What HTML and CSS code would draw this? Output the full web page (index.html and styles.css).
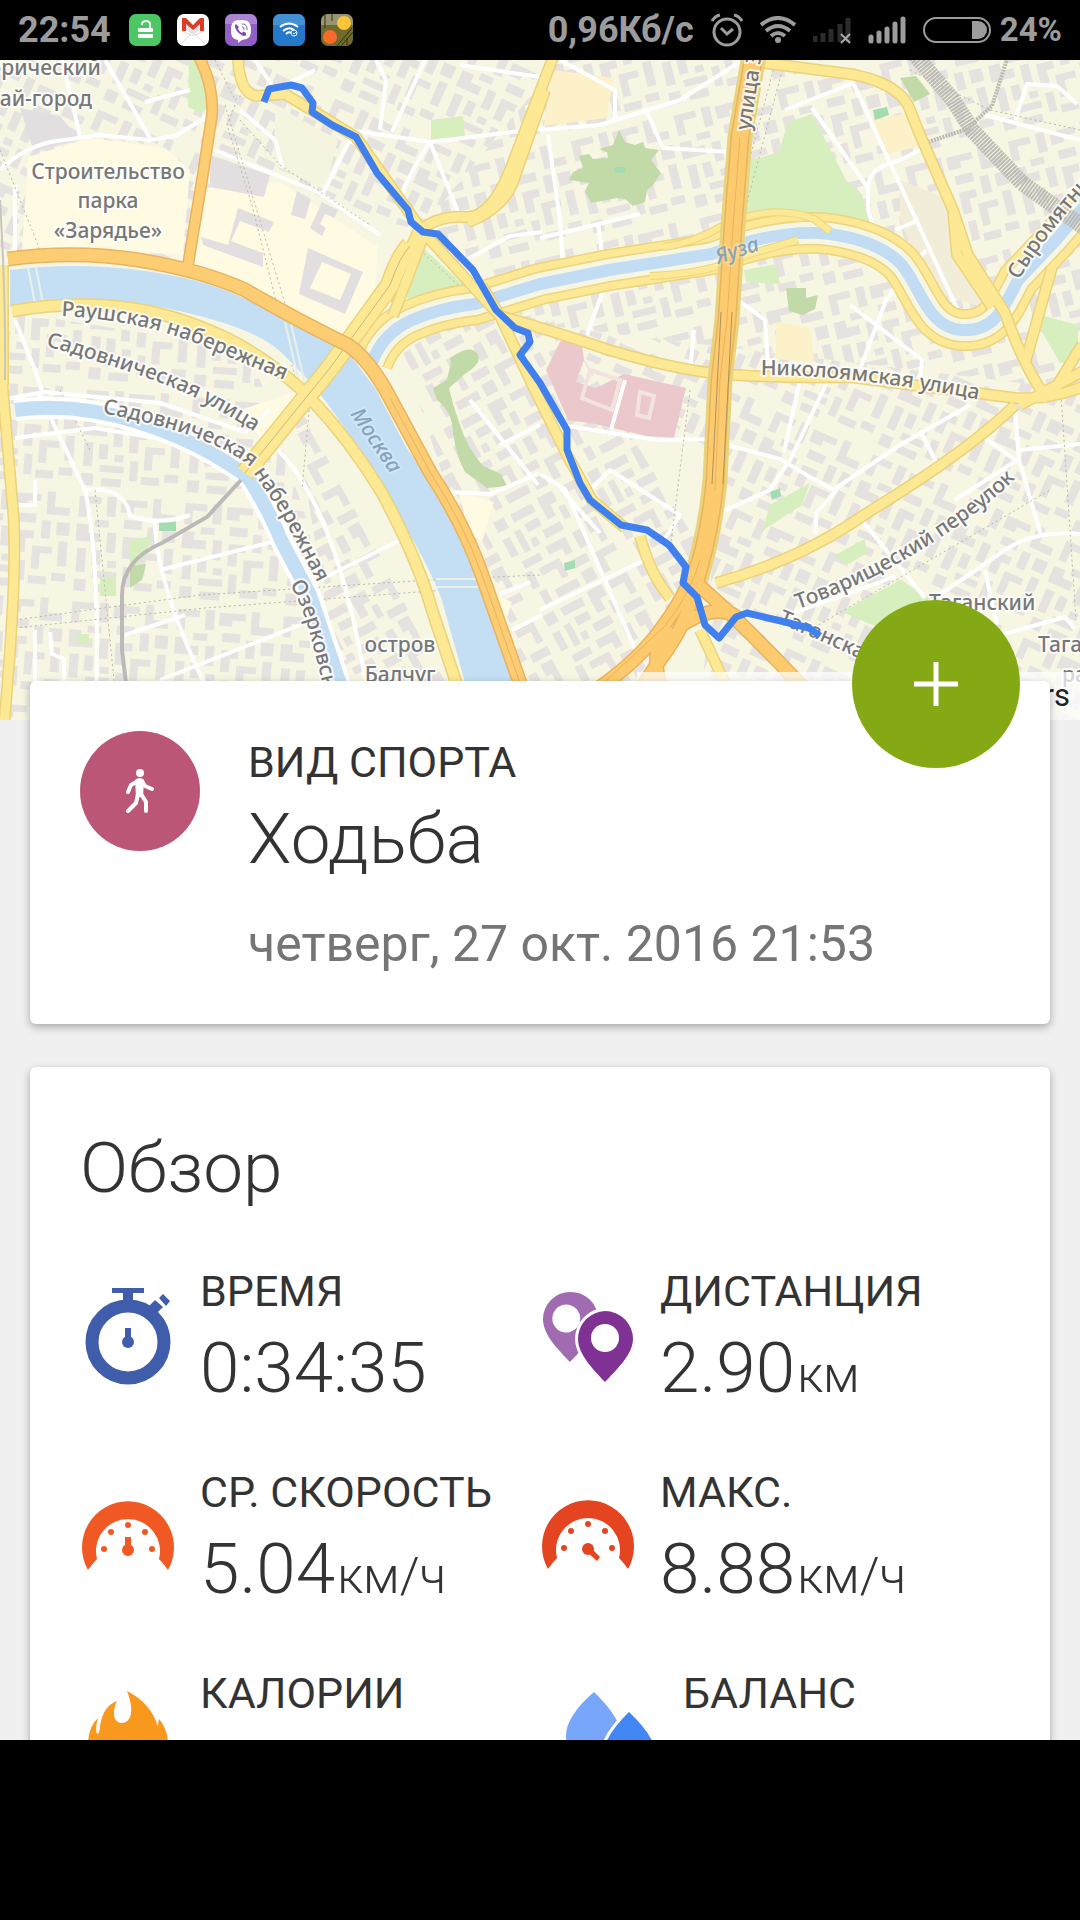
FILE: index.html
```html
<!DOCTYPE html>
<html lang="ru">
<head>
    <meta charset="UTF-8">
    <meta name="viewport" content="width=device-width, initial-scale=1.0">
    <title>Ходьба</title>
    <link rel="stylesheet" href="styles.css">
</head>
<body>
    <header class="status-bar">
        <span class="status-text">22:54</span>
        <div class="app-icons">
            <svg class="app-icon" viewBox="0 0 32 32">
                <rect width="32" height="32" rx="7" fill="#4cc764"/>
                <path d="M13 11v-1a4 3 0 0 1 8 0v5" fill="none" stroke="#fff" stroke-width="2"/>
                <rect x="9" y="14" width="15" height="4" rx="1" fill="#fff"/>
                <rect x="9" y="20" width="15" height="4" rx="1" fill="#fff"/>
            </svg>
            <svg class="app-icon" viewBox="0 0 32 32">
                <rect width="32" height="32" rx="7" fill="#fff"/>
                <path d="M5 17l11 5 11-5M5 29l9-9M27 29l-9-9" fill="none" stroke="#ddd"/>
                <path d="M9 16V9l7 6 7-6v7l-7 5z" fill="#e4e4e4"/>
                <path d="M5 17V4h4l7 7 7-7h4v13h-4v-7l-7 6-7-6v7z" fill="#da3d24"/>
            </svg>
            <svg class="app-icon" viewBox="0 0 32 32">
                <rect width="32" height="32" rx="7" fill="#915fc6"/>
                <path d="M7 0h18a7 7 0 0 1 7 7v3H0V7a7 7 0 0 1 7-7z" fill="#ab85d4"/>
                <path d="M16 6c8 0 10 3 10 10s-2 9-9 10l-4 3v-3c-5-1-7-3-7-10S8 6 16 6z" fill="#fff"/>
                <path d="M11 10c-3 2 1 8 4 10s5 3 6 1-2-4-3-3l-1 1c-2-1-4-3-4-5l1-1-3-3z" fill="#7f4cb5"/>
                <path d="M17 10c4 0 5 2 5 6M17 13c2 0 2 1 2 3" fill="none" stroke="#7f4cb5"/>
            </svg>
            <svg class="app-icon" viewBox="0 0 32 32">
                <rect width="32" height="32" rx="7" fill="#2579ca"/>
                <path d="M7 0h18a7 7 0 0 1 7 7v4H0V7a7 7 0 0 1 7-7z" fill="#4390d5"/>
                <path d="M7 13q9-7 18 0M10 17q6-5 11-1M13 20q3-3 5-1" fill="none" stroke="#fff" stroke-width="2"/>
                <circle cx="21" cy="19" r="3" fill="#2579ca" stroke="#fff"/>
                <path d="M20 19l1 1 3-3" fill="none" stroke="#fff"/>
            </svg>
            <svg class="app-icon" viewBox="0 0 32 32">
                <rect width="32" height="32" rx="7" fill="#6d6c2c"/>
                <path d="M7 0h18a7 7 0 0 1 7 7v4H0V7a7 7 0 0 1 7-7z" fill="#989471"/>
                <path d="M4 0v14M11 0v7M31 14L16 32M32 18L20 32M26 24v7" fill="none" stroke="#38300f"/>
                <circle cx="23" cy="9" r="7" fill="#fbc43a"/>
                <circle cx="9" cy="23" r="7" fill="#f96a2b"/>
            </svg>
        </div>
        <div class="status-right">
            <span class="status-text">0,96Кб/с</span>
            <svg class="icon-alarm" viewBox="0 0 32 34">
                <circle cx="16" cy="19" r="13" fill="none" stroke="#9c9c9c" stroke-width="3"/>
                <path d="M10 15l6 6 6-5M1 8q3-5 8-6M31 8q-3-5-8-6" fill="none" stroke="#9c9c9c" stroke-width="3"/>
            </svg>
            <svg class="icon-wifi" viewBox="0 0 36 28">
                <path d="M1 9Q18-5 35 9M6 15q12-10 24 0M11 20q7-6 14 0" fill="none" stroke="#9c9c9c" stroke-width="4"/>
                <circle cx="18" cy="24" r="3" fill="#9c9c9c"/>
            </svg>
            <svg class="icon-signal" viewBox="0 0 38 28">
                <path d="M2 26v-6M10 26v-9M18 26V13M27 26V8M35 26V2" stroke="#2c2c2c" stroke-width="5"/>
                <path d="M28 18l9 9M37 18l-9 9" stroke="#aaa" stroke-width="2"/>
            </svg>
            <svg class="icon-signal" viewBox="0 0 38 28">
                <path d="M3 25v-4M11 25v-8M19 25V13M27 25V8M35 25V3" stroke="#9c9c9c" stroke-width="5" stroke-linecap="round"/>
            </svg>
            <span class="battery">
                <svg class="icon-battery" viewBox="0 0 68 26">
                    <rect x="1" y="1" width="66" height="24" rx="12" fill="none" stroke="#9c9c9c" stroke-width="2"/>
                    <path d="M49 4h6a9 9 0 0 1 0 18h-6z" fill="#9c9c9c"/>
                </svg>
                <span class="status-text status-percent">24%</span>
            </span>
        </div>
    </header>

    <main class="content">
        <section class="map">
            <svg class="map-canvas" viewBox="0 0 1080 660" preserveAspectRatio="xMidYMin slice">
                <defs>
                    <g id="blocks" fill="#e6e2e0">
                        <path d="M4 5h22v7H12v14H4zM32 4h9v20h-9zM46 6h26v7H59v6H46zM78 3h8v15h15v8H78z"/>
                        <path d="M3 33h12v8h12v9H3zM21 28h14v7H21zM34 40h9v20h-9zM50 26h18v9H50zM74 32h9v18h-9zM89 33h13v13H89z"/>
                        <path d="M5 57h9v24H5zM20 58h9v15h-9zM22 79h24v7H22zM50 43h17v8h-8v14h-9zM66 58h20v7H74v16h-8zM92 52h9v25h-9z"/>
                        <path d="M4 88h12v12H4zM36 68h9v7h-9zM52 73h8v20h-8zM64 88h18v8H64zM87 84h14v8H87zM24 92h20v8H24z"/>
                    </g>
                    <pattern id="district-a" width="106" height="106" patternUnits="userSpaceOnUse" patternTransform="rotate(-14)">
                        <use href="#blocks"/>
                    </pattern>
                    <pattern id="district-b" width="106" height="106" patternUnits="userSpaceOnUse" patternTransform="rotate(24)">
                        <use href="#blocks"/>
                    </pattern>
                    <pattern id="district-c" width="106" height="106" patternUnits="userSpaceOnUse" patternTransform="rotate(62)">
                        <use href="#blocks"/>
                    </pattern>
                    <pattern id="district-d" width="106" height="106" patternUnits="userSpaceOnUse" patternTransform="rotate(4)">
                        <use href="#blocks"/>
                    </pattern>

                    <path id="yauza" d="M372 303Q382 274 410 261T475 244L540 224 609 210 712 194Q780 168 830 174 880 181 902 205C922 230 928 268 962 270S1005 245 1018 220L1056 180 1085 146"/>
                    <path id="moskva-north" d="M8 199Q75 190 138 200T245 230Q300 262 348 285 370 300 390 338L430 412Q464 464 482 515L526 640"/>
                    <path id="moskva-south" d="M12 251Q75 240 130 248T240 285Q285 312 310 338 350 380 382 433 418 500 432 550L462 640"/>
                    <path id="sadovoe" d="M754-5L740 77 733 167 727 260 720 320 715 420Q710 475 694 525"/>
                    <path id="sadovoe-south" d="M704 485Q690 530 664 565 640 600 596 630M694 525Q690 560 660 600L640 630M698 525Q740 560 810 635M668 566Q650 590 660 625M680 566Q720 540 740 560"/>
                    <path id="streets-yellow" d="M238 0Q240 33 256 36L285 34Q320 55 356 77L423 172 500 256 530 320 567 395 592 440 625 468M420 170Q440 155 465 157T510 110L554-5M468 162Q500 150 512 125L545 30M482 226L500 256Q550 270 609 290 670 308 712 313T850 317L1015 338Q1050 340 1085 326M757 2L850 14Q895 22 908 45L920 75 953 150 968 195 1005 253Q1025 310 1048 340M953 150l4 45 35 52M1015 345Q970 390 867 453 800 500 716 523M1020 345l65-35M1050 337l32-52M1026 300l26-93M640 476q10 38 30 62M700 570l33 70M2 320Q8 390 13 450T4 665M3 205v120M420 168L386 240M425 172l-32 84"/>
                    <path id="big-bridge" d="M410 186Q400 196 390 225L330 308 245 413"/>
                    <path id="canal" d="M15 350Q75 342 138 362T248 417Q270 452 281 480L310 535 342 630"/>

                    <path id="line-raush" d="M61 256Q140 260 200 285T292 323"/>
                    <path id="line-sadul" d="M46 286Q95 300 150 319T265 379"/>
                    <path id="line-sadnab" d="M102 353Q210 374 248 405 262 425 282 455L330 546"/>
                    <path id="line-ozer" d="M290 524Q305 550 314 590L332 660"/>
                    <path id="line-moskva" d="M350 354L400 428"/>
                    <path id="line-zem" d="M750 71L767-40"/>
                    <path id="line-yauza" d="M718 204L760 190"/>
                    <path id="line-nik" d="M761 315Q860 315 990 342"/>
                    <path id="line-syr" d="M1019 220Q1045 175 1100 115"/>
                    <path id="line-tov" d="M798 549Q870 524 940 478T1035 395"/>
                    <path id="line-tag" d="M778 563Q820 580 880 608"/>
                </defs>

                <!-- land and districts -->
                <rect width="1080" height="660" fill="#f6f6e3"/>
                <path d="M0 0H560L420 170 210 120V200L0 190z" fill="url(#district-b)"/>
                <path d="M560 0H1080V330L500 260 420 170z" fill="url(#district-a)"/>
                <path d="M0 250L250 290 310 470V660H0z" fill="url(#district-d)"/>
                <path d="M290 330L470 660H345z" fill="url(#district-c)"/>
                <path d="M390 250L560 260 720 520 600 660H520z" fill="url(#district-c)"/>
                <path d="M540 265L1080 330V660H700L720 400z" fill="url(#district-b)"/>

                <!-- open ground -->
                <path d="M28 97L90 78 165 88 190 110 183 194 22 190z" fill="#fefbe2"/>
                <path d="M206 128L280 122 378 187 372 270 345 275 193 205z" fill="#fefbe2"/>
                <path d="M275 45L338 80 325 130 275 105z" fill="#f5f4df"/>
                <path d="M238 148l36 14-5 10-29-11-9 20 32 12v14l-60-22-2-8 27 8zM297 131l14 8-6 20-14-4zM322 142l16 8-4 8-9-4-5 10 6 4-4 8-12-8zM308 188l55 24-18 42-46-20zM322 202l-12 26 30 12 11-26zM210 95l60 20-6 22-54-10z" fill="#e3dfe0" fill-rule="evenodd"/>
                <path d="M20 48l40 8 20 24-46 12z" fill="#e3dfe0"/>
                <path d="M552 10l62 8-8 40-62 8zM873 60l40-8 8 34-34 8zM776 262l34 6 4 34-38-3z" fill="#fcf1c9"/>
                <path d="M240 350l60-20-20 42-20 6zM458 432l36 10-12 40-10-6zM486 532l26 10-10 30-10-8z" fill="#fefbe2"/>
                <path d="M900 120l50 20 40 110-60-20-30-70z" fill="#f2edd8"/>

                <!-- parks -->
                <path d="M189 0h9l12 45-8 8-14-6zM431 60l32-4 2 22-34 2zM420 185l49 45-58 18-10-26zM788 62l24-8 34 66 16 14 10 38-40-8-85 4-2-66 34-10zM744 210l32-6 4 20-34-2zM1040 255l38 10v34l-18 4-22-38zM842 552l58-32 30 18-6 34-40-2zM672 545l20-6-20 50-12-6zM130 480l22-4-8 22-14 12zM100 518h16v18h-16zM500 246l24-4-2 14zM77 574h12v10H77zM770 445l40-22-8 22-40 26zM835 495l30-16 2 14-20 12z" fill="#d7efbf"/>
                <path d="M619 70l6 12 10 3 8-3 2 6 14 2-8 10 10 13-8 12-6 5-2 12-12 4-8-7-8-1-26 5-6-12 4-8-20-3 4-8 10-4-4-12 10-2 4 5 15-1-1-6-8-3 14-4zM786 228h20v10l12-3-3 14-12 6-14-4zM900 18l16-2 14 18-16 8-8-14zM450 298q20-14 27-5t-12 21l-16 14q4 18 10 34 8 26 24 44l18 8 6 12-20 2-22-16q-8-14-12-38 0-22-16-34l-4-12 14-8 4-18zM130 506l16-2-4 16-12 8z" fill="#c1daa8"/>
                <path d="M562 278l20 8 2 14-8 22 20 6 20-10 8-4 62 14-12 50-28-2-50-12-28-4-22-50z" fill="#ebc8cb"/>
                <path d="M590 310l30 10-8 30-30-12zM640 332l14 4-5 22-12-3z" fill="none" stroke="#f3e3e0" stroke-width="4"/>
                <path d="M615 107h10v6h-10zM873 50l14-3 2 8-14 5zM159 461h17v10h-17zM770 432l10-4 1 8-9 4zM564 503l11-3v8l-10 3z" fill="#a4dcb2"/>

                <!-- minor streets -->
                <g fill="none" stroke="#fff" stroke-width="4" stroke-linejoin="round">
                    <path d="M0 110Q20 90 50 82L100 75 150 80 175 76 210 55M62 0L80 76M105 0l45 78M145 42l45-12M15 125V200M5 205v110M210 88L320 133 380 175M240 50l35 30 8 28M350 80L323 133M335 68L430 82 545 68M376 0l10 20-6 50M425 0L392 72M430 82l28 70M430 82q-20 30-32 60M470 198l40-22 32-4M460 5l80 12M255 0l20 30 40-20"/>
                    <path d="M540 70L600 65 680 40 740 2M560 0l55 30v30M548 75L560 160 564 220M645 48l18 40 68 4M540 178l100-24M598 162l5 40M785 50l66-26M812 48L868 128V150l10 30M850 16L960 255M868 128q0-20 30-27l28-14M926 190l-40 50-30 80M850 245l72 55-2 20M735 238l30 22 4 60M985 55l95 25M1015 60l12-36 30 2 20 18M605 225l-18 50M694 270l-4 42M895 170l22-9"/>
                    <path d="M0 340L45 332 160 343 245 372 270 350M15 378L95 368 180 382 230 400 300 530 345 600M40 335L85 430Q100 500 96 640M85 430q40-4 45 26 30 10 60-1M155 460q0 60 50 165M160 510l120-30M125 575l60-20M160 620l140-55M278 390q60 60 90 245M320 520l80-40M15 260l20 50 8 24M35 570v60M50 572l2 22 12 5v30M35 420v25H12"/>
                    <path d="M567 366l90 14 60-1M625 320l-14 50M560 428l40 45M590 430l20-20 70 45-18 28M540 414l25 15 70 160M540 550L645 500M720 383l60 16 30 18 26 14-20 22v20M828 320L790 400 770 430 722 452M800 320l-16 72M970 345L900 385 836 428M920 370l20 40M1015 350l4 50 22 75M860 458l65 80M925 545l80-55q30-20 75-16M1020 390l60-6M1020 398L955 440M985 510l12 55M1000 575l65-18 10 12M985 378l30 22M450 432l40 2 48-20M470 340l68 85M500 385l40-20M500 534l30-12M512 570l30-15M795 552q60-20 100-36"/>
                </g>
                <g fill="none" stroke="#b9b7a6" stroke-dasharray="2 3">
                    <path d="M225 45L290 260 315 330M235 45l-8 20 25 80 50 200M215 0l20 40 14-10-18-35M240 60l40 45 90 60M785 0L745 150M776 0l-40 150M15 560L200 535 430 520 540 515M15 568l190-20 240-18M95 430l20 200M60 330l30 60M310 340l-8 90M1060 320l16 240M810 570l240-140M690 330l-20 160M910 10l80 40 90 20M0 90l40 100M420 190l46 42"/>
                </g>

                <!-- rivers -->
                <path d="M10 210Q75 202 138 210T241 237Q300 262 344 287L375 328 406 387 448 447Q475 500 482 520L518 640H470L441 537Q430 510 413 480T372 407L327 343Q310 320 282 293T165 248 10 247z" fill="#c4dff4"/>
                <use href="#canal" fill="none" stroke="#fff" stroke-width="22"/>
                <use href="#canal" fill="none" stroke="#c4dff4" stroke-width="14"/>
                <use href="#yauza" fill="none" stroke="#ecd57c" stroke-width="42"/>
                <use href="#yauza" fill="none" stroke="#fde895" stroke-width="39"/>
                <use href="#yauza" fill="none" stroke="#ecd57c" stroke-width="25"/>
                <use href="#yauza" fill="none" stroke="#f6f6e3" stroke-width="22"/>
                <use href="#yauza" fill="none" stroke="#c1dcf3" stroke-width="12"/>
                <path d="M664 187q30-4 60-22 50-22 90-6l16 12M650 216q60-2 100-22l48-14" fill="none" stroke="#ecd57c" stroke-width="8"/>
                <path d="M664 187q30-4 60-22 50-22 90-6l16 12M650 216q60-2 100-22l48-14" fill="none" stroke="#fde895" stroke-width="6"/>
                <path d="M28 207l8 42M36 207l8 42M285 262l14 60M291 264l14 60M436 519h45M436 527h47" stroke="#e9efe9" stroke-width="2"/>

                <!-- railways -->
                <path d="M241 420L207 457 162 483Q122 500 122 535V590l6 50" fill="none" stroke="#bcb9b9" stroke-width="4"/>
                <path d="M915-5L953 40 972 70 1022 123 1085 168" fill="none" stroke="#bdbab4" stroke-width="16" stroke-dasharray="2 1"/>
                <path d="M970 66l22-20 16-50M970 68l-42 14" fill="none" stroke="#bdbab4" stroke-width="4" stroke-dasharray="2 1"/>

                <!-- main roads -->
                <g fill="none" stroke-linejoin="round">
                    <use href="#streets-yellow" stroke="#ead37b" stroke-width="12"/>
                    <use href="#moskva-south" stroke="#ead37b" stroke-width="13"/>
                    <use href="#big-bridge" stroke="#ead37b" stroke-width="20"/>
                    <use href="#streets-yellow" stroke="#fde894" stroke-width="9"/>
                    <use href="#moskva-south" stroke="#fde894" stroke-width="10"/>
                    <use href="#big-bridge" stroke="#fde894" stroke-width="17"/>
                    <use href="#big-bridge" stroke="#c9ba7a" stroke-width="1"/>
                    <path d="M198-5Q214 25 212 55L202 120 188 205" stroke="#e9b35f" stroke-width="12"/>
                    <use href="#moskva-north" stroke="#e9b35f" stroke-width="15"/>
                    <use href="#sadovoe" stroke="#ead37b" stroke-width="25"/>
                    <use href="#sadovoe" stroke="#e9b35f" stroke-width="19"/>
                    <use href="#sadovoe-south" stroke="#e9b35f" stroke-width="15"/>
                    <path d="M198-5Q214 25 212 55L202 120 188 205" stroke="#fdcd74" stroke-width="9"/>
                    <use href="#moskva-north" stroke="#fdcd74" stroke-width="12"/>
                    <use href="#sadovoe" stroke="#fdcb6e" stroke-width="16"/>
                    <use href="#sadovoe-south" stroke="#fdcb6e" stroke-width="12"/>
                    <path d="M740 77L733 167 727 260 720 320 715 430M390 338l40 74Q464 464 482 515L526 640M700 500Q690 535 664 567L596 630" stroke="#e9b35f"/>
                    <path d="M721 252l-9 172M732 252l-9 172" stroke="#b1925a"/>
                    <path d="M0 140Q6 240 5 320" stroke="#c8c6bd" stroke-width="2"/>
                </g>

                <!-- labels -->
                <g class="map-labels">
                    <text x="101" y="15" text-anchor="end">Исторический</text>
                    <text x="92" y="46" text-anchor="end">Китай-город</text>
                    <text x="108" y="119" text-anchor="middle">Строительство</text>
                    <text x="108" y="148" text-anchor="middle">парка</text>
                    <text x="108" y="178" text-anchor="middle">«Зарядье»</text>
                    <text x="400" y="592" text-anchor="middle">остров</text>
                    <text x="400" y="622" text-anchor="middle">Балчуг</text>
                    <text x="929" y="550">Таганский</text>
                    <text x="1038" y="592">Таганский</text>
                    <text x="1062" y="622">район</text>
                    <text><textPath href="#line-raush">Раушская набережная</textPath></text>
                    <text><textPath href="#line-sadul">Садовническая улица</textPath></text>
                    <text><textPath href="#line-sadnab">Садовническая набережная</textPath></text>
                    <text><textPath href="#line-ozer">Озерковская</textPath></text>
                    <text><textPath href="#line-zem">улица Зем</textPath></text>
                    <text><textPath href="#line-nik">Николоямская улица</textPath></text>
                    <text><textPath href="#line-syr">Сыромятни</textPath></text>
                    <text><textPath href="#line-tov">Товарищеский переулок</textPath></text>
                    <text><textPath href="#line-tag">Таганская</textPath></text>
                    <text class="water-label"><textPath href="#line-moskva">Москва</textPath></text>
                    <text class="water-label"><textPath href="#line-yauza">Яуза</textPath></text>
                </g>

                <!-- recorded track -->
                <path d="M264 42l5-13 22-4 11 3 11 15-1 9 20 13 24 12 21 36 31 37 3 12 12 10 15 2 35 36 23 40 19 18 13 5 2 9-10 13 20 28 27 47v20l13 33 10 17 31 25 26 5 22 15 17 22-3 16 14 14 8 28 14 13 17-21 11-4 34 8 28 7 11 8" fill="none" stroke="#3f7fee" stroke-width="7" stroke-linejoin="round"/>
            </svg>
            <p class="attribution">© OpenStreetMap contributors</p>
        </section>

        <div class="cards">
            <section class="card sport-card">
                <button class="fab" aria-label="Добавить">
                    <svg class="fab-icon" viewBox="0 0 44 44">
                        <path d="M22 0v44M0 22h44" stroke="#fff" stroke-width="5"/>
                    </svg>
                </button>
                <span class="sport-badge">
                    <svg class="sport-icon" viewBox="0 0 28 44">
                        <circle cx="14" cy="4" r="4" fill="#fff"/>
                        <path d="M12 12l-7 4-3 7M16 12l3 5 7 3M12 25l-2 9-8 8M15 25l5 8v9" fill="none" stroke="#fff" stroke-width="4" stroke-linecap="round" stroke-linejoin="round"/>
                        <path d="M9 11q5-4 9 0l-1 17h-7z" fill="#fff"/>
                    </svg>
                </span>
                <div class="sport-info">
                    <p class="label">ВИД СПОРТА</p>
                    <h1 class="value">Ходьба</h1>
                    <p class="date">четверг, 27 окт. 2016 21:53</p>
                </div>
            </section>

            <section class="card overview">
                <h2 class="value">Обзор</h2>
                <div class="stats">
                    <div class="stat">
                        <svg class="stat-icon" viewBox="0 0 100 130">
                            <circle cx="48" cy="79" r="36" fill="none" stroke="#405dab" stroke-width="13"/>
                            <path d="M32 25h32v5H53v8H43v-8H32z" fill="#405dab"/>
                            <path d="M68 44l7-7 8 7-8 8zM79 35l4-4 7 7-4 5z" fill="#405dab"/>
                            <path d="M45 65h6v10h-6z" fill="#405dab"/>
                            <circle cx="48" cy="79" r="6" fill="#405dab"/>
                        </svg>
                        <div>
                            <p class="label">ВРЕМЯ</p>
                            <p class="value">0:34:35</p>
                        </div>
                    </div>
                    <div class="stat">
                        <svg class="stat-icon" viewBox="0 0 100 130">
                            <path d="M30 29a27 27 0 0 1 28 27c0 17-18 32-28 43C20 88 3 73 3 56a27 27 0 0 1 27-27zm0 13a14 14 0 1 0 0 27 14 14 0 0 0 0-27z" fill="#a06bb0" fill-rule="evenodd"/>
                            <path d="M65 48a28 28 0 0 1 28 28c0 16-18 32-28 43C55 108 38 92 38 76a28 28 0 0 1 27-28z" fill="#7f3293" stroke="#fff" stroke-width="6" paint-order="stroke"/>
                            <circle cx="65" cy="75" r="14" fill="#fff"/>
                        </svg>
                        <div>
                            <p class="label">ДИСТАНЦИЯ</p>
                            <p class="value">2.90<span class="unit">км</span></p>
                        </div>
                    </div>
                    <div class="stat">
                        <svg class="stat-icon" viewBox="0 0 100 130">
                            <path d="M8 106a46 46 0 1 1 80 0q-4-6-9-11a32 32 0 1 0-62 0q-5 5-9 11z" fill="#f05923"/>
                            <g fill="#f05923">
                                <circle cx="24" cy="85" r="3"/>
                                <circle cx="31" cy="68" r="3"/>
                                <circle cx="48" cy="61" r="3"/>
                                <circle cx="65" cy="68" r="3"/>
                                <circle cx="72" cy="85" r="3"/>
                                <circle cx="48" cy="86" r="6"/>
                                <path d="M45 73h6v12h-6z"/>
                            </g>
                        </svg>
                        <div>
                            <p class="label">СР. СКОРОСТЬ</p>
                            <p class="value">5.04<span class="unit">км/ч</span></p>
                        </div>
                    </div>
                    <div class="stat">
                        <svg class="stat-icon" viewBox="0 0 100 130">
                            <path d="M8 105a46 46 0 1 1 80 0q-4-6-9-11a32 32 0 1 0-62 0q-5 5-9 11z" fill="#e4441f"/>
                            <g fill="#e4441f">
                                <circle cx="24" cy="84" r="3"/>
                                <circle cx="31" cy="67" r="3"/>
                                <circle cx="48" cy="60" r="3"/>
                                <circle cx="65" cy="67" r="3"/>
                                <circle cx="72" cy="84" r="3"/>
                                <circle cx="48" cy="85" r="6"/>
                                <path d="M50 83l10 10-3 4-10-9z"/>
                            </g>
                        </svg>
                        <div>
                            <p class="label">МАКС.</p>
                            <p class="value">8.88<span class="unit">км/ч</span></p>
                        </div>
                    </div>
                    <div class="stat">
                        <svg class="stat-icon" viewBox="0 0 100 130">
                            <path d="M47 26q24 12 31 36 0-5 1-8 9 10 9 26v20q-40 30-80 0V80q0-18 10-27-3 10-1 16 3-1 3-8 3-20 17-25-5 11-2 18 4 6 11 3 10-7 1-31z" fill="#f8981d"/>
                        </svg>
                        <div>
                            <p class="label">КАЛОРИИ</p>
                            <p class="value">164</p>
                        </div>
                    </div>
                    <div class="stat stat-indent">
                        <svg class="stat-icon" viewBox="0 0 100 130">
                            <path d="M31 27q27 26 27 44a27 29 0 0 1-55 0q0-20 28-44z" fill="#77a6fa"/>
                            <path d="M66 47q28 26 28 48a27 29 0 0 1-55 0q0-22 27-48z" fill="#4285f4" stroke="#fff" stroke-width="6" paint-order="stroke"/>
                        </svg>
                        <div>
                            <p class="label">БАЛАНС</p>
                            <p class="value">0.35<span class="unit">л</span></p>
                        </div>
                    </div>
                </div>
            </section>
        </div>
    </main>

    <footer class="nav-bar"></footer>
</body>
</html>
```
FILE: styles.css
```css
* {
    margin: 0;
    padding: 0;
    box-sizing: border-box;
}

body {
    background-color: #f0f0f0;
    color: #333;
    font-family: Roboto, sans-serif;
    height: 100vh;
    display: flex;
    flex-direction: column;
    overflow: hidden;
}

/* Status bar */
.status-bar {
    flex: none;
    height: 60px;
    padding: 0 18px;
    background: #000;
    display: flex;
    align-items: center;
    gap: 18px;
}

.status-text {
    color: #9c9c9c;
    font-size: 36px;
    line-height: 60px;
    font-weight: 700;
}

.status-percent {
    font-size: 33px;
}

.app-icons {
    display: flex;
    gap: 16px;
}

.app-icon {
    width: 32px;
    height: 32px;
}

.status-right {
    margin-left: auto;
    display: flex;
    align-items: center;
    gap: 17px;
}

.icon-alarm {
    width: 32px;
    height: 34px;
}

.icon-wifi {
    width: 36px;
    height: 28px;
}

.icon-signal {
    width: 38px;
    height: 28px;
}

.battery {
    display: flex;
    align-items: center;
    gap: 9px;
}

.icon-battery {
    width: 68px;
    height: 26px;
}

/* Map */
.content {
    flex: 1;
    min-height: 0;
    overflow: hidden;
}

.map {
    position: relative;
    height: 660px;
}

.map-canvas {
    display: block;
    width: 100%;
    height: 100%;
}

.map-labels {
    font-family: "Noto Sans", sans-serif;
    font-size: 21px;
    font-weight: 500;
    fill: #777;
    stroke: #fff;
    stroke-opacity: 0.8;
    stroke-width: 4px;
    stroke-linejoin: round;
    paint-order: stroke;
}

.water-label {
    font-style: italic;
    fill: #86a3bb;
    stroke-opacity: 0.2;
}

.attribution {
    position: absolute;
    right: 0;
    bottom: 0;
    padding: 0 10px;
    color: #222;
    background: rgba(255, 255, 255, 0.7);
    font-size: 31px;
    line-height: 48px;
}

/* Cards */
.cards {
    position: relative;
    margin-top: -39px;
    padding: 0 30px;
    display: flex;
    flex-direction: column;
    gap: 43px;
}

.card {
    position: relative;
    background: #fff;
    border-radius: 6px;
    box-shadow: 0 3px 8px rgba(0, 0, 0, 0.3);
    padding: 50px;
}

.label {
    font-size: 43px;
    line-height: 56px;
}

.value {
    font-size: 71px;
    line-height: 98px;
    font-weight: 300;
}

.unit {
    font-size: 50px;
    line-height: 50px;
    margin-left: 2px;
}

.sport-card {
    display: flex;
    gap: 48px;
}

.sport-badge {
    flex: none;
    width: 120px;
    height: 120px;
    border-radius: 50%;
    background: #bb5677;
    display: flex;
    align-items: center;
    justify-content: center;
}

.sport-icon {
    width: 28px;
    height: 44px;
}

.sport-info {
    padding-top: 3px;
}

.date {
    margin-top: 26px;
    color: #757575;
    font-size: 50px;
    line-height: 60px;
}

.fab {
    position: absolute;
    top: -81px;
    right: 30px;
    width: 168px;
    height: 168px;
    border: none;
    border-radius: 50%;
    background: #85a914;
    display: flex;
    align-items: center;
    justify-content: center;
    cursor: pointer;
}

.fab-icon {
    width: 44px;
    height: 44px;
}

/* Overview */
.overview {
    padding-top: 52px;
}

.stats {
    margin-top: 46px;
    display: grid;
    grid-template-columns: 1fr 1fr;
    row-gap: 47px;
}

.stat {
    display: flex;
    gap: 20px;
    white-space: nowrap;
}

.stat-indent {
    padding-left: 23px;
}

.stat-icon {
    flex: none;
    width: 100px;
    height: 130px;
}

.nav-bar {
    flex: none;
    height: 180px;
    background: #000;
}
```
